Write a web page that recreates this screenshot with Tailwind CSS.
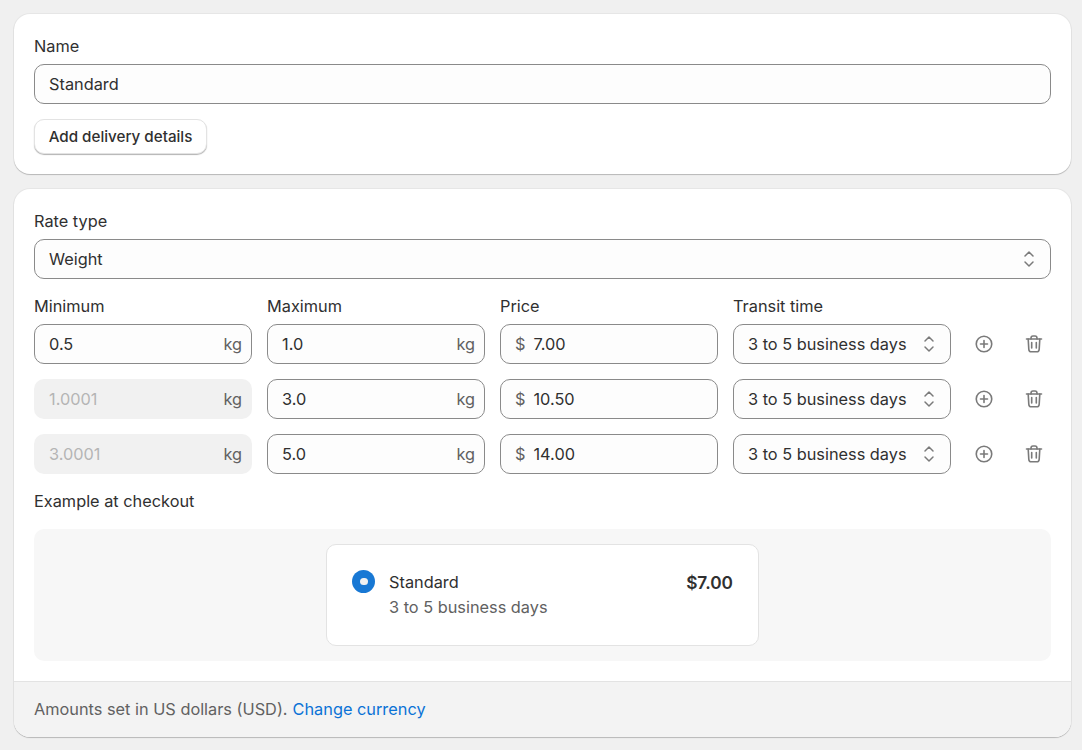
<!DOCTYPE html>
<html lang="en">
<head>
    <meta charset="UTF-8">
    <title>Shipping rate</title>
    <script src="https://cdn.jsdelivr.net/npm/@tailwindcss/browser@4"></script>
</head>
<body class="bg-[#f0f0f0] font-['Inter',sans-serif] text-[16.32px] text-[#303030] h-[750px] overflow-hidden">
    <div class="pt-[14px] pl-[14px] pr-[11px] flex flex-col gap-[15px]">
        <!-- name card -->
        <section class="bg-white rounded-[16px] h-[160px] p-5 pt-[20px] shadow-[0_1px_1px_rgba(0,0,0,0.2),0_0_0_1px_rgba(0,0,0,0.04)]">
            <label class="block leading-6 h-[30px]">Name</label>
            <div class="h-10 rounded-[10px] border border-[#8a8a8a] bg-[#fdfdfd] px-[14px] flex items-center">Standard</div>
            <button class="mt-[15px] h-[35px] w-[173px] pt-[1px] rounded-[10px] bg-white border border-[#e3e3e3] shadow-[0_1px_1px_rgba(0,0,0,0.3)] font-[550] text-[15.2px] flex items-center justify-center">Add delivery details</button>
        </section>

        <!-- rate card -->
        <section class="bg-white rounded-[16px] h-[548px] flex flex-col overflow-hidden shadow-[0_1px_1px_rgba(0,0,0,0.2),0_0_0_1px_rgba(0,0,0,0.04)]">
            <div class="flex-1 px-5 pt-5">
                <label class="block leading-6 h-[30px]">Rate type</label>
                <div class="h-10 rounded-[10px] border border-[#8a8a8a] bg-[#fdfdfd] pl-[14px] pr-[14px] flex items-center justify-between">
                    <span>Weight</span>
                    <svg class="w-[14px] h-[18px] text-[#7a7a7a]" viewBox="0 0 14 18" fill="none" stroke="currentColor" stroke-width="1.5" stroke-linecap="round" stroke-linejoin="round"><path d="M3 6 7 2l4 4"/><path d="M3 12l4 4 4-4"/></svg>
                </div>

                <div class="grid grid-cols-[218px_218px_218px_218px] gap-x-[15px] mt-[15px] h-[30px] leading-6">
                    <span>Minimum</span><span>Maximum</span><span>Price</span><span>Transit time</span>
                </div>

                <div class="flex flex-col gap-[15px]">
                    <div class="flex items-center gap-[15px]">
                        <div class="w-[218px] h-10 rounded-[10px] border border-[#8a8a8a] bg-[#fdfdfd] pl-[14px] pr-[9px] flex items-center justify-between"><span>0.5</span><span class="text-[#616161]">kg</span></div>
                        <div class="w-[218px] h-10 rounded-[10px] border border-[#8a8a8a] bg-[#fdfdfd] pl-[14px] pr-[9px] flex items-center justify-between"><span>1.0</span><span class="text-[#616161]">kg</span></div>
                        <div class="w-[218px] h-10 rounded-[10px] border border-[#8a8a8a] bg-[#fdfdfd] pl-[14px] flex items-center gap-2"><span class="text-[#616161]">$</span><span>7.00</span></div>
                        <div class="w-[218px] h-10 rounded-[10px] border border-[#8a8a8a] bg-[#fdfdfd] pl-[14px] pr-[14px] flex items-center justify-between"><span class="whitespace-nowrap">3 to 5 business days</span>
                            <svg class="w-[14px] h-[18px] text-[#7a7a7a]" viewBox="0 0 14 18" fill="none" stroke="currentColor" stroke-width="1.5" stroke-linecap="round" stroke-linejoin="round"><path d="M3 6 7 2l4 4"/><path d="M3 12l4 4 4-4"/></svg>
                        </div>
                        <svg class="w-5 h-5 ml-[8px] text-[#7a7a7a]" viewBox="0 0 20 20" fill="none" stroke="currentColor" stroke-width="1.6" stroke-linecap="round"><circle cx="10" cy="10" r="7.75"/><path d="M10 6.5v7M6.5 10h7"/></svg>
                        <svg class="w-5 h-5 ml-[15px] text-[#7a7a7a]" viewBox="0 0 20 20" fill="none" stroke="currentColor" stroke-width="1.6" stroke-linecap="round" stroke-linejoin="round"><path d="M2.5 5h15"/><path d="M7 5V4.2C7 3 8 2 9 2h2c1 0 2 1 2 2.2V5"/><path d="M4.2 5l.6 10.2c.1 1.6 1.1 2.6 2.4 2.6h5.6c1.3 0 2.3-1 2.4-2.6L15.8 5"/><path d="M7.7 8.5v5.5M12.3 8.5v5.5"/></svg>
                    </div>
                    <div class="flex items-center gap-[15px]">
                        <div class="w-[218px] h-10 rounded-[10px] bg-[#f1f1f1] pl-[15px] pr-[10px] flex items-center justify-between"><span class="text-[#b5b5b5]">1.0001</span><span class="text-[#616161]">kg</span></div>
                        <div class="w-[218px] h-10 rounded-[10px] border border-[#8a8a8a] bg-[#fdfdfd] pl-[14px] pr-[9px] flex items-center justify-between"><span>3.0</span><span class="text-[#616161]">kg</span></div>
                        <div class="w-[218px] h-10 rounded-[10px] border border-[#8a8a8a] bg-[#fdfdfd] pl-[14px] flex items-center gap-2"><span class="text-[#616161]">$</span><span>10.50</span></div>
                        <div class="w-[218px] h-10 rounded-[10px] border border-[#8a8a8a] bg-[#fdfdfd] pl-[14px] pr-[14px] flex items-center justify-between"><span class="whitespace-nowrap">3 to 5 business days</span>
                            <svg class="w-[14px] h-[18px] text-[#7a7a7a]" viewBox="0 0 14 18" fill="none" stroke="currentColor" stroke-width="1.5" stroke-linecap="round" stroke-linejoin="round"><path d="M3 6 7 2l4 4"/><path d="M3 12l4 4 4-4"/></svg>
                        </div>
                        <svg class="w-5 h-5 ml-[8px] text-[#7a7a7a]" viewBox="0 0 20 20" fill="none" stroke="currentColor" stroke-width="1.6" stroke-linecap="round"><circle cx="10" cy="10" r="7.75"/><path d="M10 6.5v7M6.5 10h7"/></svg>
                        <svg class="w-5 h-5 ml-[15px] text-[#7a7a7a]" viewBox="0 0 20 20" fill="none" stroke="currentColor" stroke-width="1.6" stroke-linecap="round" stroke-linejoin="round"><path d="M2.5 5h15"/><path d="M7 5V4.2C7 3 8 2 9 2h2c1 0 2 1 2 2.2V5"/><path d="M4.2 5l.6 10.2c.1 1.6 1.1 2.6 2.4 2.6h5.6c1.3 0 2.3-1 2.4-2.6L15.8 5"/><path d="M7.7 8.5v5.5M12.3 8.5v5.5"/></svg>
                    </div>
                    <div class="flex items-center gap-[15px]">
                        <div class="w-[218px] h-10 rounded-[10px] bg-[#f1f1f1] pl-[15px] pr-[10px] flex items-center justify-between"><span class="text-[#b5b5b5]">3.0001</span><span class="text-[#616161]">kg</span></div>
                        <div class="w-[218px] h-10 rounded-[10px] border border-[#8a8a8a] bg-[#fdfdfd] pl-[14px] pr-[9px] flex items-center justify-between"><span>5.0</span><span class="text-[#616161]">kg</span></div>
                        <div class="w-[218px] h-10 rounded-[10px] border border-[#8a8a8a] bg-[#fdfdfd] pl-[14px] flex items-center gap-2"><span class="text-[#616161]">$</span><span>14.00</span></div>
                        <div class="w-[218px] h-10 rounded-[10px] border border-[#8a8a8a] bg-[#fdfdfd] pl-[14px] pr-[14px] flex items-center justify-between"><span class="whitespace-nowrap">3 to 5 business days</span>
                            <svg class="w-[14px] h-[18px] text-[#7a7a7a]" viewBox="0 0 14 18" fill="none" stroke="currentColor" stroke-width="1.5" stroke-linecap="round" stroke-linejoin="round"><path d="M3 6 7 2l4 4"/><path d="M3 12l4 4 4-4"/></svg>
                        </div>
                        <svg class="w-5 h-5 ml-[8px] text-[#7a7a7a]" viewBox="0 0 20 20" fill="none" stroke="currentColor" stroke-width="1.6" stroke-linecap="round"><circle cx="10" cy="10" r="7.75"/><path d="M10 6.5v7M6.5 10h7"/></svg>
                        <svg class="w-5 h-5 ml-[15px] text-[#7a7a7a]" viewBox="0 0 20 20" fill="none" stroke="currentColor" stroke-width="1.6" stroke-linecap="round" stroke-linejoin="round"><path d="M2.5 5h15"/><path d="M7 5V4.2C7 3 8 2 9 2h2c1 0 2 1 2 2.2V5"/><path d="M4.2 5l.6 10.2c.1 1.6 1.1 2.6 2.4 2.6h5.6c1.3 0 2.3-1 2.4-2.6L15.8 5"/><path d="M7.7 8.5v5.5M12.3 8.5v5.5"/></svg>
                    </div>
                </div>

                <p class="mt-[15px] leading-6">Example at checkout</p>

                <!-- checkout preview -->
                <div class="mt-4 h-[132px] rounded-[10px] bg-[#f7f7f7] flex justify-center pt-[15px]">
                    <div class="w-[433px] h-[102px] rounded-[10px] bg-white border border-[#e3e3e3] pl-[25px] pr-[25px] pt-[25px] flex items-start">
                        <span class="w-[23px] h-[23px] rounded-full bg-[#1878d4] flex items-center justify-center"><span class="w-[8px] h-[7px] rounded-full bg-[#f1f1f1]"></span></span>
                        <div class="ml-[14px] flex-1">
                            <div class="leading-6">Standard</div>
                            <div class="leading-6 mt-[1px] text-[#616161]">3 to 5 business days</div>
                        </div>
                        <span class="font-semibold text-[17.3px] leading-6 pt-[1px]">$7.00</span>
                    </div>
                </div>
            </div>
            <footer class="h-[56px] bg-[#f3f3f3] border-t border-[#e3e3e3] px-5 pb-[1px] flex items-center gap-[5px] text-[#616161]">
                <span>Amounts set in US dollars (USD).</span>
                <a class="text-[#0a72d6]">Change currency</a>
            </footer>
        </section>
    </div>
</body>
</html>
